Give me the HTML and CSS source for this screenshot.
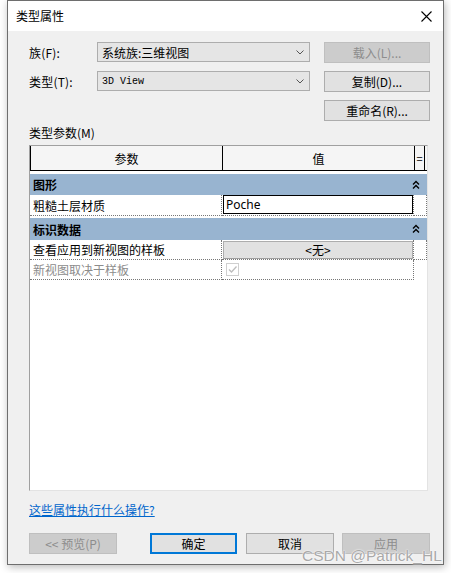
FILE: index.html
```html
<!DOCTYPE html>
<html lang="zh-CN">
<head>
<meta charset="utf-8">
<title>类型属性</title>
<link rel="stylesheet" href="styles.css">
</head>
<body>
<div class="window">
  <div class="titlebar">
    <span class="title">类型属性</span>
    <svg class="close" width="11" height="11" viewBox="0 0 11 11"><path d="M0.5 0.5 L10.5 10.5 M10.5 0.5 L0.5 10.5" stroke="#000" stroke-width="1.1" fill="none"/></svg>
  </div>
  <div class="content">
    <div class="form">
      <label class="lbl">族(F):</label>
      <div class="select"><span>系统族:三维视图</span><svg class="chev" width="8" height="5" viewBox="0 0 8 5"><path d="M0.5 0.5 L4 4 L7.5 0.5" stroke="#555" fill="none"/></svg></div>
      <button class="btn disabled">载入(L)...</button>
      <label class="lbl">类型(T):</label>
      <div class="select"><span class="mono">3D View</span><svg class="chev" width="8" height="5" viewBox="0 0 8 5"><path d="M0.5 0.5 L4 4 L7.5 0.5" stroke="#555" fill="none"/></svg></div>
      <button class="btn">复制(D)...</button>
      <span></span><span></span>
      <button class="btn">重命名(R)...</button>
    </div>
    <div class="section-label">类型参数(M)</div>
    <div class="grid">
      <div class="hdr">
        <div class="hc c1">参数</div>
        <div class="hc c2">值</div>
        <div class="hc c3">=</div>
      </div>
      <div class="spacer3"></div>
      <div class="group g1"><span>图形</span><svg class="collapse" width="8" height="10" viewBox="0 0 8 10"><path d="M1 4.5 L4 1.5 L7 4.5 M1 8.5 L4 5.5 L7 8.5" stroke="#000" stroke-width="1.4" fill="none"/></svg></div>
      <div class="row r1">
        <div class="cell c1">粗糙土层材质</div>
        <div class="cell c2"><div class="input">Poche</div></div>
        <div class="cell c3"></div>
      </div>
      <div class="spacer2"></div>
      <div class="group g2"><span>标识数据</span><svg class="collapse" width="8" height="10" viewBox="0 0 8 10"><path d="M1 4.5 L4 1.5 L7 4.5 M1 8.5 L4 5.5 L7 8.5" stroke="#000" stroke-width="1.4" fill="none"/></svg></div>
      <div class="row r2">
        <div class="cell c1">查看应用到新视图的样板</div>
        <div class="cell c2"><div class="valbtn">&lt;无&gt;</div></div>
        <div class="cell c3"></div>
      </div>
      <div class="row r3">
        <div class="cell c1 gray">新视图取决于样板</div>
        <div class="cell c2"><span class="check"><svg width="11" height="11" viewBox="0 0 11 11"><path d="M2 5.5 L4.5 8 L9.5 2.5" stroke="#bdbdbd" stroke-width="1.3" fill="none"/></svg></span></div>
      </div>
    </div>
    <a class="link" href="#">这些属性执行什么操作?</a>
    <div class="actions">
      <button class="btn disabled preview">&lt;&lt; 预览(P)</button>
      <button class="btn ok">确定</button>
      <button class="btn cancel">取消</button>
      <button class="btn disabled apply">应用</button>
    </div>
  </div>
</div>
<div class="watermark">CSDN @Patrick_HL</div>
</body>
</html>
```

FILE: styles.css
```css
html, body {
  margin: 0;
  padding: 0;
  background: #ffffff;
}
body {
  position: relative;
  width: 451px;
  height: 573px;
  overflow: hidden;
  font-family: "Noto Sans CJK SC", "Noto Sans", sans-serif;
  font-size: 12px;
  color: #000;
}
.window {
  box-sizing: border-box;
  width: 437px;
  height: 565px;
  margin-left: 7px;
  border: 1px solid #6e6e6e;
  background: #f0f0f0;
  box-shadow: 1px 2px 8px rgba(0, 0, 0, 0.28);
  display: flex;
  flex-direction: column;
}
.titlebar {
  height: 30px;
  background: #ffffff;
  display: flex;
  align-items: center;
  justify-content: space-between;
  padding: 0 11px 0 8px;
  flex: none;
}
.title {
  font-size: 12px;
  line-height: 14px;
}
.close {
  display: block;
}
.content {
  padding: 11px 12px 0 21px;
  display: flex;
  flex-direction: column;
}
.form {
  display: grid;
  grid-template-columns: 68px 213px 120px;
  column-gap: 0;
  row-gap: 8px;
  grid-auto-rows: 21px;
}
.lbl {
  display: flex;
  align-items: center;
  font-size: 12px;
  letter-spacing: 0.2px;
}
.select {
  box-sizing: border-box;
  border: 1px solid #adadad;
  background: #e5e5e5;
  display: flex;
  align-items: center;
  justify-content: space-between;
  padding: 0 5px 0 4px;
  height: 20px;
  font-size: 12px;
}
.mono {
  font-family: "Liberation Mono", monospace;
  font-size: 10px;
}
.chev {
  display: block;
}
.btn {
  box-sizing: border-box;
  height: 21px;
  border: 1px solid #adadad;
  background: #e1e1e1;
  font-family: "Noto Sans CJK SC", "Noto Sans", sans-serif;
  font-size: 12px;
  color: #000;
  padding: 0;
  margin: 0;
  line-height: 18px;
}
.form .btn {
  width: 106px;
  justify-self: end;
}
.btn.disabled {
  background: #cccccc;
  border-color: #bfbfbf;
  color: #8d8d8d;
}
.section-label {
  margin-top: 5px;
  height: 14px;
  line-height: 14px;
  font-size: 12px;
}
.grid {
  box-sizing: border-box;
  margin-top: 5px;
  width: 399px;
  height: 346px;
  background: #ffffff;
  border-top: 1px solid #a0a0a0;
  border-left: 1px solid #a0a0a0;
  border-right: 1px solid #e3e3e3;
  border-bottom: 1px solid #e3e3e3;
  display: flex;
  flex-direction: column;
}
.hdr {
  display: flex;
  height: 25px;
  box-sizing: border-box;
  border-bottom: 1px solid #000;
  background: #f5f5f5;
}
.hc {
  display: flex;
  align-items: center;
  justify-content: center;
  box-sizing: border-box;
  border-left: 1px solid #000;
}
.c1 { width: 192px; }
.c2 { width: 192px; }
.c3 { width: 11px; }
.hc.c3 {
  border-right: 1px solid #000;
  font-size: 11px;
}
.spacer3 { height: 3px; }
.spacer2 { height: 2px; }
.group {
  background: #98b4d0;
  display: flex;
  align-items: center;
  justify-content: space-between;
  padding: 0 7px 0 3px;
  font-weight: bold;
  font-size: 12px;
}
.g1 { height: 21px; }
.g2 { height: 22px; }
.collapse { display: block; }
.row {
  display: flex;
  height: 20px;
}
.r1 { height: 21px; }
.cell {
  box-sizing: border-box;
  border-bottom: 1px dotted #777;
  border-right: 1px dotted #777;
  display: flex;
  align-items: center;
}
.cell.c1 {
  padding-left: 3px;
  border-left: none;
}
.cell.c2 {
  padding-left: 1px;
}
.cell.c3 {
  width: 13px;
}
.r1 .cell.c1, .r2 .cell.c1, .r3 .cell.c1 { width: 192px; }
.r1 .cell.c2 { align-items: flex-start; }
.gray { color: #8c8c8c; }
.input {
  box-sizing: border-box;
  width: 190px;
  height: 19px;
  border: 1px solid #000;
  background: #fff;
  font-family: "Noto Sans", sans-serif;
  font-size: 12px;
  line-height: 17px;
  padding-left: 2px;
}
.valbtn {
  box-sizing: border-box;
  width: 190px;
  height: 18px;
  border: 1px solid #adadad;
  border-bottom-color: #a0a0a0;
  background: #e1e1e1;
  display: flex;
  align-items: center;
  justify-content: center;
  font-size: 12px;
}
.check {
  box-sizing: border-box;
  width: 13px;
  height: 13px;
  border: 1px solid #cfcfcf;
  margin-left: 3px;
  display: flex;
  align-items: center;
  justify-content: center;
}
.check svg { display: block; }
.link {
  margin-top: 12px;
  height: 14px;
  line-height: 14px;
  font-size: 12px;
  color: #0066cc;
  text-decoration: underline;
  align-self: flex-start;
}
.actions {
  margin-top: 16px;
  display: flex;
}
.preview { width: 88px; }
.ok {
  width: 87px;
  margin-left: 33px;
  border: 2px solid #0078d7;
  line-height: 17px;
}
.cancel {
  width: 88px;
  margin-left: 9px;
}
.apply {
  width: 88px;
  margin-left: 8px;
}
.watermark {
  position: absolute;
  left: 302px;
  top: 547px;
  font-family: "Liberation Sans", Arial, sans-serif;
  font-size: 15.5px;
  color: #a9a9a9;
  text-shadow: 0 0 2px #fff, 0 0 1px #fff;
  white-space: nowrap;
}
```
